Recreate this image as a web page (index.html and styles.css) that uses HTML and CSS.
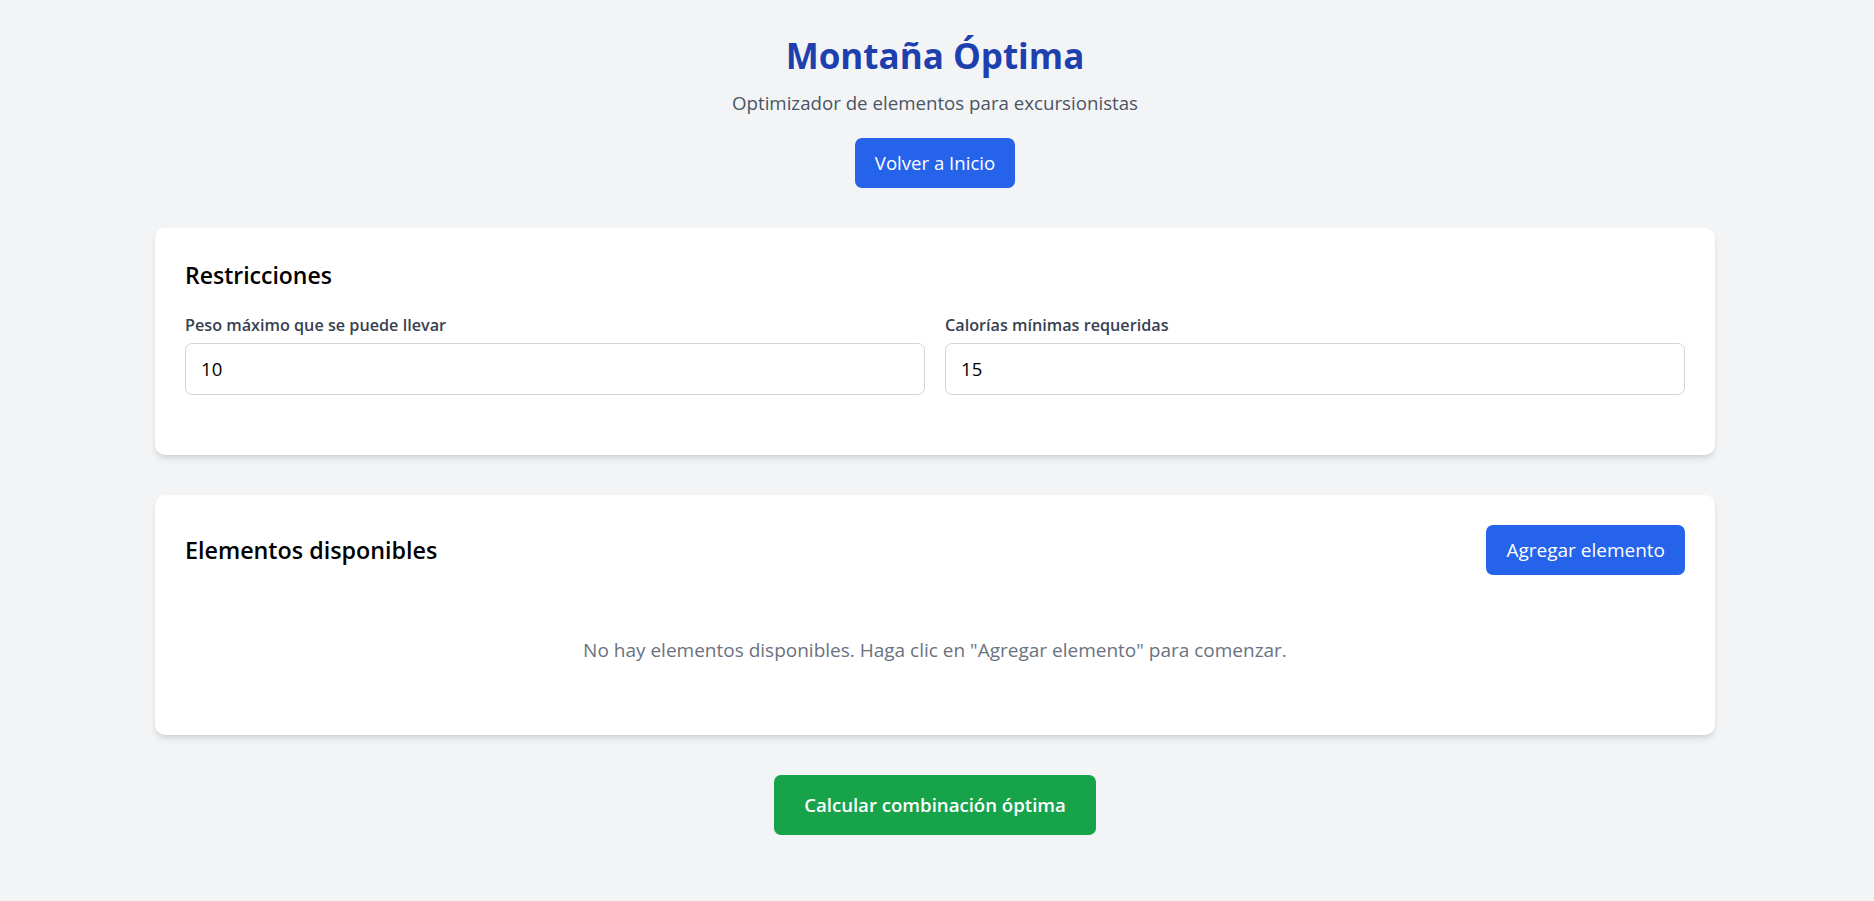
FILE: index.html
```html
<!DOCTYPE html>
<html lang="es">
<head>
<meta charset="utf-8">
<title>Montaña Óptima</title>
<link rel="stylesheet" href="styles.css">
</head>
<body>
<div class="page">
  <header class="header">
    <h1 class="title">Montaña Óptima</h1>
    <p class="subtitle">Optimizador de elementos para excursionistas</p>
    <button class="btn btn-blue">Volver a Inicio</button>
  </header>

  <section class="card">
    <h2 class="card-title">Restricciones</h2>
    <div class="fields">
      <div class="field">
        <label class="label" for="peso">Peso máximo que se puede llevar</label>
        <input class="input" id="peso" type="text" value="10">
      </div>
      <div class="field">
        <label class="label" for="cal">Calorías mínimas requeridas</label>
        <input class="input" id="cal" type="text" value="15">
      </div>
    </div>
  </section>

  <section class="card">
    <div class="card-head">
      <h2 class="card-title card-title-inline">Elementos disponibles</h2>
      <button class="btn btn-blue btn-add">Agregar elemento</button>
    </div>
    <p class="empty">No hay elementos disponibles. Haga clic en "Agregar elemento" para comenzar.</p>
  </section>

  <div class="actions">
    <button class="btn btn-green">Calcular combinación óptima</button>
  </div>
</div>
</body>
</html>
```

FILE: styles.css
```css
* {
  box-sizing: border-box;
}

body {
  margin: 0;
  padding: 0 4px 0 0;
  background: #f3f4f6;
  font-family: "Open Sans", "Noto Sans", sans-serif;
  color: #111827;
}

.page {
  max-width: 1560px;
  margin: 0 auto;
  padding: 33px 0 40px;
}

.header {
  display: flex;
  flex-direction: column;
  align-items: center;
  margin-bottom: 40px;
}

.title {
  margin: 0 0 10px;
  font-size: 35px;
  line-height: 45px;
  font-weight: 700;
  color: #1e40af;
}

.subtitle {
  margin: 0 0 20px;
  font-size: 18.7px;
  line-height: 30px;
  color: #4b5563;
}

.btn {
  border: 0;
  border-radius: 7px;
  font-family: inherit;
  font-size: 18.6px;
  line-height: 30px;
  color: #ffffff;
  cursor: pointer;
}

.btn-blue {
  background: #2563eb;
  padding: 10px 20px;
}

.btn-add {
  font-size: 19px;
}

.btn-green {
  background: #16a34a;
  padding: 15px 30px;
  font-weight: 600;
}

.card {
  background: #ffffff;
  border-radius: 10px;
  padding: 30px;
  margin-bottom: 40px;
  box-shadow: 0 5px 7.5px -1.25px rgba(0, 0, 0, 0.1), 0 2.5px 5px -2.5px rgba(0, 0, 0, 0.1);
}

.card-title {
  margin: 0 0 20px;
  font-size: 23px;
  line-height: 35px;
  font-weight: 600;
  color: #000000;
}

.card-title-inline {
  margin: 0;
  font-size: 23.3px;
}

.fields {
  display: grid;
  grid-template-columns: 1fr 1fr;
  gap: 20px;
  margin-bottom: 30px;
}

.field {
  display: flex;
  flex-direction: column;
}

.label {
  margin-bottom: 5px;
  font-size: 16.2px;
  line-height: 25px;
  font-weight: 600;
  color: #374151;
}

.input {
  width: 100%;
  border: 1px solid #d1d5db;
  border-radius: 7px;
  padding: 10px 15px;
  font-family: inherit;
  font-size: 18.6px;
  line-height: 30px;
  color: #000000;
  background: #ffffff;
}

.card-head {
  display: flex;
  justify-content: space-between;
  align-items: center;
  margin-bottom: 20px;
}

.empty {
  margin: 0;
  padding: 40px 0;
  text-align: center;
  font-size: 19px;
  line-height: 30px;
  color: #6b7280;
}

.actions {
  display: flex;
  justify-content: center;
}
```
